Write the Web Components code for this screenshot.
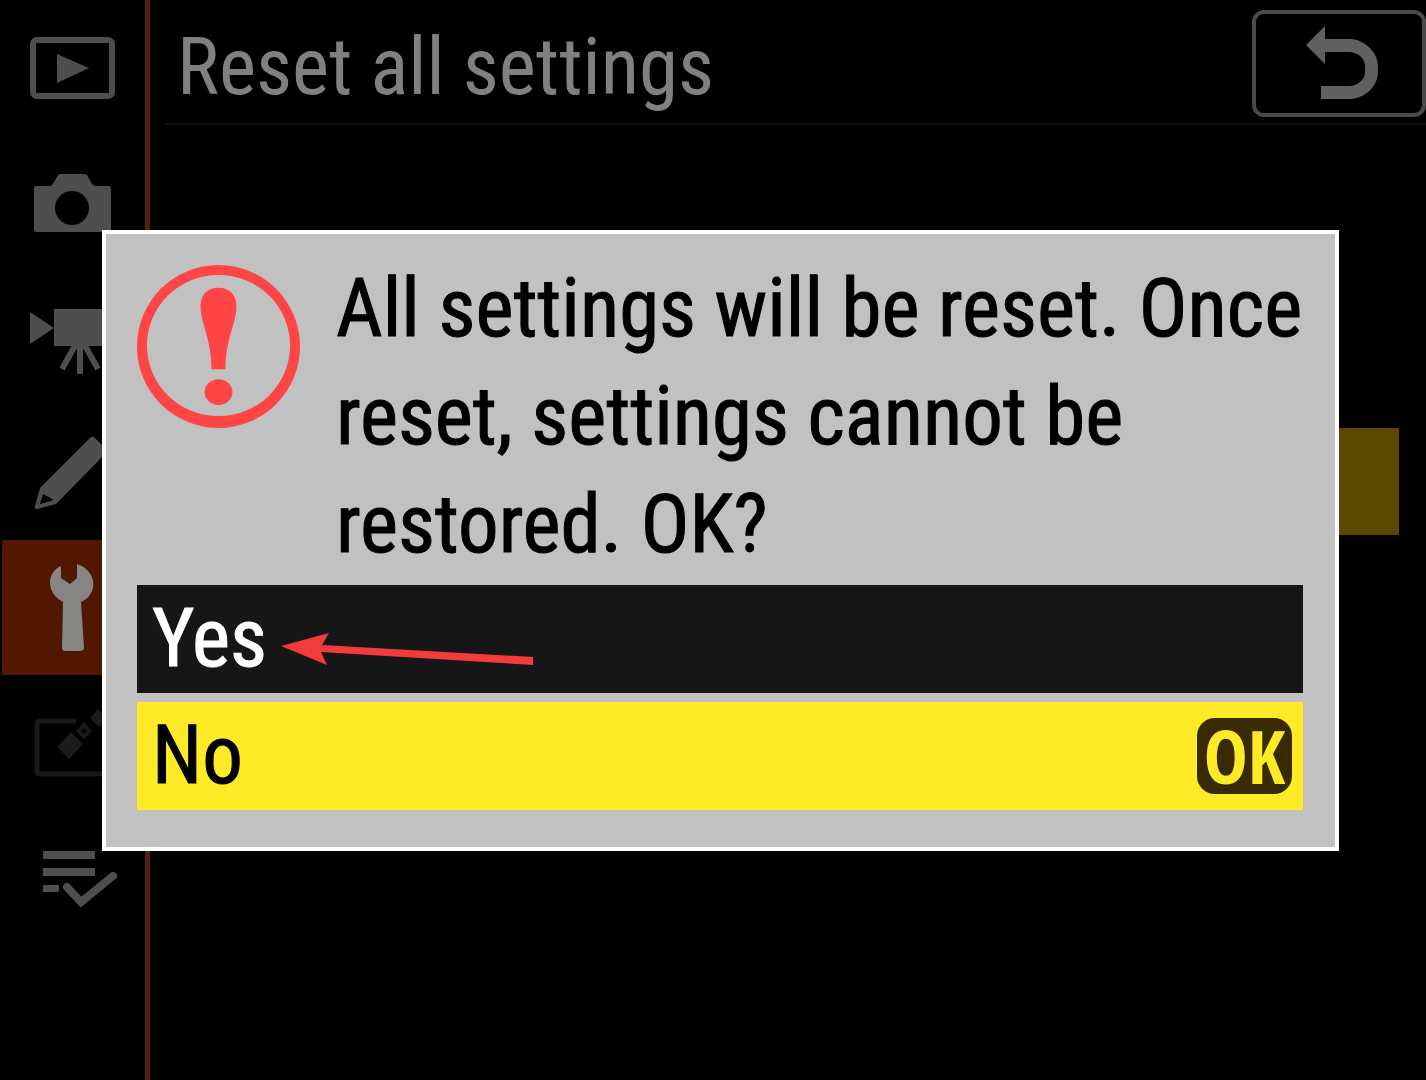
<!DOCTYPE html>
<html lang="en">
<head>
<meta charset="utf-8">
<title>Reset all settings</title>
<style>
  body {
    margin: 0;
    background: #000;
    font-family: "Roboto Condensed", Roboto, sans-serif;
  }
</style>
</head>
<body>
<camera-screen>
  <menu-tabs slot="tabs"></menu-tabs>
  <menu-page slot="page" heading="Reset all settings"></menu-page>
  <confirm-dialog slot="dialog">
    All settings will be reset. Once<br>reset, settings cannot be<br>restored. OK?
    <choice-row slot="choices" label="Yes"></choice-row>
    <choice-row slot="choices" label="No" selected></choice-row>
  </confirm-dialog>
  <pointer-arrow slot="note"></pointer-arrow>
</camera-screen>

<script>
class ShadowElement extends HTMLElement {
  connectedCallback() {
    if (!this.shadowRoot) this.attachShadow({ mode: "open" }).innerHTML = this.render();
  }
}

customElements.define("camera-screen", class extends ShadowElement {
  render() {
    return `<style>
      :host { display: flex; position: relative; min-height: 100vh; overflow: hidden; background: #000; }
      ::slotted([slot=page]) { flex: 1; min-width: 0; }
      .overlay { position: absolute; inset: 0; padding: 230px 87px 0 102px; }
      .note { position: absolute; left: 280px; top: 632px; }
    </style>
    <slot name="tabs"></slot>
    <slot name="page"></slot>
    <div class="overlay"><slot name="dialog"></slot></div>
    <div class="note"><slot name="note"></slot></div>`;
  }
});

const TABS = [
  ["Playback", `<rect x="33" y="40" width="79" height="56" rx="4" fill="none" stroke="#4e4e4e" stroke-width="6"/><path d="M57 54 89 68 57 83Z"/>`],
  ["Photo shooting", `<path fill-rule="evenodd" d="M36 51H50Q53 50 54 47L57 42Q58 39 61 39H84Q87 39 88 42L91 47Q93 51 96 51H109Q111 51 111 53V95Q111 97 109 97H36Q34 97 34 95V53Q34 51 36 51ZM72 56A17 17 0 1 0 72 90A17 17 0 1 0 72 56Z"/>`],
  ["Video recording", `<path d="M30 42 54 58 30 74ZM54 39H112V76H54Z"/><path d="M76 74 62 99M80 74V104M84 74 98 99" stroke="#4e4e4e" stroke-width="6" fill="none"/>`],
  ["Custom settings", `<path fill-rule="evenodd" d="M91 32Q93 31 95 33L106 44Q108 46 106 48L60 95 56 99 37 104Q34 104 35 101L40 83ZM43 89 40 99 54 95Z"/>`],
  ["Setup", `<path fill="#858583" d="M61 26V38L70 44 77 38V24C98 31 98 55 81 62L84 108Q84 111 80 111H65Q62 111 62 108L63 62C45 52 47 32 61 26Z"/>`],
  ["Retouch", `<g fill="#1b1b1b"><path d="M76 46H40Q37 46 37 49V96Q37 99 40 99H108" fill="none" stroke="#191919" stroke-width="5"/><path fill-rule="evenodd" d="M71 57 83 69 69 84 57 72ZM84 47 92 56 84 64 76 56ZM84 53 81 56 84 59 87 56ZM98 34 108 44 99 52 90 43Z"/></g>`],
  ["My menu", `<path d="M43 41H95V49H43ZM43 58H95V66H43ZM43 75H59V82H43Z"/><path d="M67 77 81 92 113 66" fill="none" stroke="#4e4e4e" stroke-width="8" stroke-linecap="round"/>`]
];

customElements.define("menu-tabs", class extends ShadowElement {
  render() {
    return `<style>
      :host { display: block; box-sizing: border-box; width: 150px; border-right: 5px solid #54200f; }
      nav { display: flex; flex-direction: column; }
      button { display: block; height: 135px; margin: 0; padding: 0; border: 0; background: none; }
      button[aria-current] { background: linear-gradient(#521700, #521700) 2px 0 no-repeat; }
      svg { display: block; width: 145px; height: 135px; fill: #4e4e4e; }
    </style>
    <nav aria-label="Menus">${TABS.map(([name, art]) =>
      `<button type="button" aria-label="${name}"${name === "Setup" ? ' aria-current="page"' : ""}><svg viewBox="0 0 145 135" aria-hidden="true">${art}</svg></button>`).join("")}</nav>`;
  }
});

customElements.define("menu-page", class extends ShadowElement {
  render() {
    return `<style>
      :host { display: flex; flex-direction: column; }
      header { display: flex; justify-content: space-between; align-items: flex-start; box-sizing: border-box;
        height: 125px; margin-left: 15px; padding: 10px 0 0 12px; border-bottom: 2px solid #12100f; }
      h1 { margin: 0; color: #808080; font-size: 79px; font-weight: 400; line-height: 114px; white-space: nowrap; }
      button { box-sizing: border-box; width: 174px; height: 107px; margin: 0; padding: 0;
        border: 4px solid #4a4a4a; border-radius: 12px; background: none; }
      svg { display: block; width: 166px; height: 99px; }
      .row { height: 107px; margin: 303px 27px 0 15px; background: #5c4700; }
    </style>
    <header>
      <h1>${this.getAttribute("heading")}</h1>
      <button type="button" aria-label="Back"><svg viewBox="0 0 166 99" aria-hidden="true">
        <path fill="#606060" d="M50 31 69 12V25H96C111 27 122 40 122 52V58C122 71 111 83 96 85H65V72H94C103 71 109 65 109 58V52C109 45 103 39 94 38H69V50Z"/></svg></button>
    </header>
    <div class="row"></div>`;
  }
});

customElements.define("confirm-dialog", class extends ShadowElement {
  render() {
    return `<style>
      :host { display: block; box-sizing: border-box; border: 4px solid #fff; background: #c2c1c1; padding: 21px 32px 37px 31px; }
      .message { display: flex; align-items: flex-start; gap: 36px; }
      svg { flex: none; display: block; width: 163px; height: 163px; margin-top: 10px; }
      p { margin: 0; color: #000; font-size: 81px; line-height: 108px; white-space: nowrap;
        -webkit-text-stroke: 1px currentColor; }
      .choices { display: flex; flex-direction: column; gap: 9px; margin-top: 6px; }
    </style>
    <div role="alertdialog" aria-labelledby="text">
      <div class="message">
        <svg viewBox="0 0 164 164" aria-hidden="true" fill="#ff4546">
          <path fill-rule="evenodd" d="M82 0A82 82 0 1 0 82 164A82 82 0 1 0 82 0ZM82 10A72 71 0 1 1 82 152A72 71 0 1 1 82 10Z"/>
          <path d="M82 23C94 23 101 31 100 44C99 60 89 76 89 105H75C75 76 65 60 64 44C63 31 70 23 82 23Z"/>
          <ellipse cx="82" cy="128" rx="14" ry="13"/>
        </svg>
        <p id="text"><slot></slot></p>
      </div>
      <div class="choices"><slot name="choices"></slot></div>
    </div>`;
  }
});

customElements.define("choice-row", class extends ShadowElement {
  render() {
    const selected = this.hasAttribute("selected");
    return `<style>
      :host { display: block; }
      button { display: flex; align-items: center; justify-content: space-between; box-sizing: border-box;
        width: 100%; height: 108px; margin: 0; padding: 0 11px 0 15px; border: 0;
        background: #161616; color: #fff; font: inherit; text-align: left; }
      :host([selected]) button { background: #feea27; color: #000; }
      .label { font-size: 81px; line-height: 108px; -webkit-text-stroke: 1px currentColor; }
      .ok { display: flex; align-items: center; justify-content: center; width: 95px; height: 76px;
        border-radius: 18px; background: #382a03; color: #feea27;
        font-family: "Open Sans Condensed", "Roboto Condensed", sans-serif; font-size: 74px; font-weight: 700; line-height: 76px; }
    </style>
    <button type="button"><span class="label">${this.getAttribute("label")}</span>${selected ? '<span class="ok">OK</span>' : ""}</button>`;
  }
});

customElements.define("pointer-arrow", class extends ShadowElement {
  render() {
    return `<style>
      :host { display: block; pointer-events: none; }
      svg { display: block; width: 254px; height: 34px; }
    </style>
    <svg viewBox="0 0 254 34" aria-hidden="true"><path fill="#f43b3b" d="M1 14 49 1 42 13 253 25V33L41 20 47 33Z"/></svg>`;
  }
});
</script>
</body>
</html>
